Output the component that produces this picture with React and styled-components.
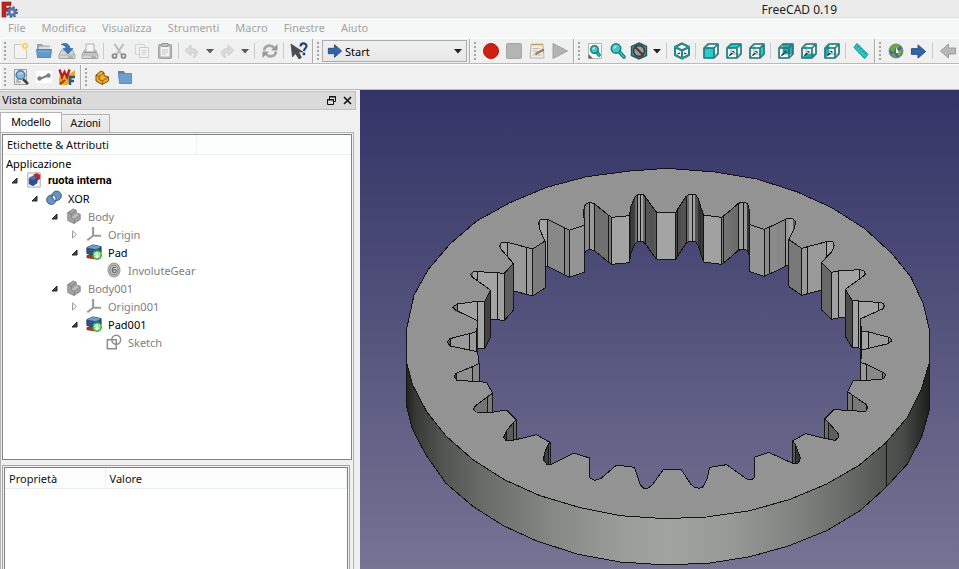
import React from "react";
import styled, { createGlobalStyle } from "styled-components";

const GlobalStyle = createGlobalStyle`
  * { box-sizing: border-box; }
  body {
    margin: 0;
    background: #f0f0f0;
    font-family: "Noto Sans", "Open Sans", sans-serif;
    font-size: 11px;
    color: #111;
  }
  button, select { font: inherit; color: inherit; }
`;

const compactFont = `"Roboto", "Liberation Sans", sans-serif`;

/* ---------- window chrome ---------- */

const Window = styled.div`
  display: flex;
  flex-direction: column;
  height: 100vh;
  overflow: hidden;
`;

const TitleBar = styled.header`
  display: grid;
  grid-template-columns: 1fr auto 122px;
  align-items: center;
  height: 18px;
  flex: none;
  background: #ebebeb;
  border-bottom: 1px solid #dfe1e1;
`;

const AppTitle = styled.h1`
  margin: 0;
  font-size: 12px;
  line-height: 20px;
  font-weight: 400;
  color: #222;
`;

const MenuBar = styled.nav`
  display: flex;
  height: 20px;
  flex: none;
  background: #f6f8f8;
`;

const MenuItem = styled.button`
  border: 0;
  background: none;
  padding: 0 8px;
  line-height: 20px;
  color: #a3a49f;
`;

const ToolRow = styled.div`
  display: flex;
  height: 26px;
  flex: none;
  overflow: hidden;
  background: #f0f0f0;
  border-top: 1px solid #fff;
  border-bottom: 1px solid #b9b8bf;
`;

const ToolGroup = styled.div`
  display: flex;
  flex: none;
  align-items: center;
  padding-right: 2px;
  border-left: 1px solid #fff;
  border-right: 1px solid ${(p) => (p.$last ? "transparent" : "#a9a9ab")};
`;

const Grip = styled.span`
  width: 3px;
  height: 18px;
  margin: 0 2px 0 3px;
  background: radial-gradient(circle at 1px 1px, #a4a4a4 1px, transparent 1px) 0 0 / 3px 4px;
`;

const ToolButton = styled.button`
  display: flex;
  align-items: center;
  justify-content: center;
  width: ${(p) => (p.$split ? 20 : 23)}px;
  height: 22px;
  padding: 0;
  border: 0;
  background: none;
  opacity: ${(p) => (p.disabled ? 0.4 : 1)};
`;

const MenuArrow = styled.button`
  display: flex;
  align-items: center;
  justify-content: center;
  width: 15px;
  height: 22px;
  padding: 0;
  border: 0;
  background: none;
`;

const Divider = styled.span`
  width: 1px;
  height: 16px;
  margin: 0 3px 0 2px;
  background: #cbcbcb;
`;

const Combo = styled.label`
  display: flex;
  align-items: center;
  width: 145px;
  height: 22px;
  padding: 0 4px;
  border: 1px solid #acacac;
  background: linear-gradient(#f0f0f0, #e8e8e8);
`;

const ComboSelect = styled.select`
  flex: 1;
  min-width: 0;
  appearance: none;
  border: 0;
  padding: 0 0 0 2px;
  background: none;
  outline: none;
  color: #000;
`;

/* ---------- combined view ---------- */

const Workspace = styled.main`
  display: flex;
  flex: 1;
  min-height: 0;
`;

const Dock = styled.aside`
  display: flex;
  flex-direction: column;
  width: 356px;
  flex: none;
  margin-right: 4px;
  padding-top: 1px;
`;

const DockTitle = styled.div`
  display: flex;
  align-items: center;
  height: 19px;
  flex: none;
  padding: 0 0 0 2px;
  background: #dadada;
  border: 1px solid #c3c3c3;
  border-left: 0;
`;

const DockName = styled.h2`
  flex: 1;
  margin: 0;
  font-family: ${compactFont};
  font-size: 11px;
  font-weight: 400;
`;

const DockButton = styled.button`
  display: flex;
  align-items: center;
  justify-content: center;
  width: 16px;
  height: 16px;
  padding: 0;
  border: 0;
  background: none;
`;

const Tabs = styled.div`
  display: flex;
  align-items: flex-end;
  height: 22px;
  flex: none;
  padding-top: 2px;
`;

const Tab = styled.button`
  width: ${(p) => (p.$active ? 62 : 48)}px;
  height: ${(p) => (p.$active ? 20 : 18)}px;
  padding: 0;
  border: 1px solid #b4b4b4;
  border-width: 1px 1px 0 ${(p) => (p.$active ? 1 : 0)}px;
  background: ${(p) => (p.$active ? "#fff" : "linear-gradient(#f0f0f0, #e6e6e6)")};
  font-family: ${compactFont};
  line-height: 18px;
`;

const TabPage = styled.div`
  display: flex;
  flex-direction: column;
  flex: 1;
  min-height: 0;
  gap: 5px;
  margin-right: 2px;
  padding: 1px 1px 0 1px;
  border: 1px solid #b4b4b4;
  border-bottom: 0;
`;

const TreeFrame = styled.section`
  display: flex;
  flex-direction: column;
  flex: 327 1 0;
  min-height: 0;
  overflow: hidden;
  background: #fff;
  border: 1px solid #828282;
`;

const TreeHeader = styled.div`
  display: grid;
  grid-template-columns: 194px 1fr;
  height: 20px;
  flex: none;
  line-height: 20px;
  background: #fcfdfd;
  border-bottom: 1px solid #edf1f1;
`;

const TreeColumn = styled.span`
  padding-left: 4px;
  border-right: 1px solid #edf1f1;
`;

const Tree = styled.ul`
  margin: 0;
  padding: 0;
  list-style: none;
`;

const TreeRow = styled.li`
  display: flex;
  align-items: center;
  height: ${(p) => (p.$root ? 16 : 18)}px;
  padding-left: ${(p) => (p.$root ? 3 : p.$depth * 20 - 15)}px;
  color: ${(p) => (p.$hidden ? "#808080" : "#000")};
  font-weight: ${(p) => (p.$bold ? 700 : 400)};
  font-family: ${(p) => (p.$bold ? compactFont : "inherit")};
`;

const Expander = styled.span`
  display: flex;
  justify-content: center;
  width: 12px;
  margin-right: 6px;
`;

const NodeIcon = styled.span`
  display: flex;
  width: 18px;
  margin-right: 4px;
`;

const PropertyFrame = styled.section`
  display: flex;
  flex: 103 1 0;
  min-height: 0;
  margin-right: 2px;
  padding: 1px 1px 0 1px;
  border: 1px solid #a4a4a4;
  border-bottom: 0;
`;

const PropertyBody = styled.div`
  flex: 1;
  background: #fff;
  border: 1px solid #828282;
  border-bottom: 0;
`;

const PropertyTable = styled.table`
  width: 100%;
  border-collapse: collapse;
  table-layout: fixed;
`;

const PropertyHead = styled.th`
  width: ${(p) => (p.$narrow ? "100px" : "auto")};
  height: 21px;
  padding: 0 4px;
  text-align: left;
  font-weight: 400;
  background: #fcfcfc;
  border-right: 1px solid #edf1f1;
  border-bottom: 1px solid #e8eeee;
`;

/* ---------- 3D viewport ---------- */

const Viewport = styled.section`
  flex: 1;
  min-width: 0;
  background: linear-gradient(#333366, #767493);
`;

const Scene = styled.svg`
  display: block;
  width: 100%;
  height: 100%;
`;

/* Scene units are thirds of a pixel. Each run is [dx, dy, "points"];
   "!" marks a profile knot that gets a vertical edge line. */
const HOLE_RUNS = [
  [900, 210, "47,157! 53,147! 64,130 78,110! 86,103 97,102! 106,103 115,116 122,140 131,165! 184,172! 190,168! 203,158 215,148 235,130! 250,126! 262,130 267,145 268,193! 313,208! 328,201! 352,190 376,178! 386,175 398,175 407,185 402,208 386,238! 425,265! 443,260! 500,245! 518,244 523,257 515,275 484,308! 514,337! 535,333! 597,329! 611,332 616,342 608,350 556,388! 577,422! 596,423! 655,427! 670,430 674,439 668,447 600,477! 605,514! 626,516! 684,531! 693,536 695,543 684,551 606,570"],
  [900, 750, "602,68! 620,73! 667,96! 677,103 672,115 660,119 580,122 563,155! 577,165! 618,193! 623,203 617,214 562,212 523,208 494,237! 506,248! 534,280 536,292 525,301 490,294 436,281 398,303! 407,315! 421,355 415,369 400,371 326,337 282,352! 284,412 275,419 260,417 200,374 149,382 142,415 130,440 118,445 104,442 92,432 64,389 10,389"],
  [120, 750, "755,437 743,445 732,445 721,435 703,382 650,375 603,415 585,421 570,415 567,370! 569,354! 521,339 455,373 441,373 430,360! 435,335 444,315! 450,307! 409,284 335,302 318,302 311,292 320,272! 340,248! 349,240! 320,210 275,217 228,216 220,208 226,198 263,170! 278,160! 260,127 235,125 170,121 163,110 168,100! 217,80! 237,70! 233,35"],
  [120, 210, "232,575 150,558 142,546 150,536! 208,521! 230,515! 233,482 168,451 158,441 172,432! 232,424! 254,424! 271,390! 218,352 211,343 220,335 232,335! 292,338! 312,341! 340,310! 305,270 298,258 303,249 322,247! 380,262! 398,267! 435,243! 420,210 416,190 420,179 442,178! 493,203! 508,211! 554,195! 550,155 556,133 568,127! 583,131! 604,148 625,165! 635,172! 688,167! 693,138 705,110 713,103! 720,103! 728,103 737,112! 750,130 762,147 770,157!"],
];

const OUTER_BACK = "138,725 162,615 205,538 270,462 350,393 450,338 560,292 680,260 810,243 920,235 960,238 1065,246 1190,267 1310,305 1415,353 1513,415 1595,490 1652,560 1690,642 1708,718";
const RIM_TOP = "1708,818 1685,895 1642,982 1578,1058 1497,1126 1400,1182 1290,1228 1170,1262 1040,1281 915,1286 780,1277 660,1253 540,1217 435,1170 340,1110 258,1038 200,965 158,885 138,810";
const RIM_BOTTOM = "138,940 156,1015 198,1095 258,1180 340,1250 430,1307 530,1353 655,1393 780,1416 920,1425 1050,1419 1170,1400 1285,1368 1400,1322 1500,1262 1578,1192 1642,1122 1685,1040 1708,960";

const DEPTH = 141;
const hole = HOLE_RUNS.flatMap(([dx, dy, text]) =>
  text.split(" ").map((token) => {
    const [x, y] = token.replace("!", "").split(",").map(Number);
    return { x: x + dx, y: y + dy, knot: token.endsWith("!") };
  })
);
const holePoints = hole.map((p) => `${p.x},${p.y}`).join(" ");

const walls = hole
  .map((a, i) => ({ a, b: hole[(i + 1) % hole.length] }))
  .filter(({ a, b }) => b.x > a.x)
  .map(({ a, b }) => {
    const dx = b.x - a.x;
    const facing = dx / Math.hypot(dx, (b.y - a.y) * 1.5);
    const v = Math.round(22 + 142 * facing);
    return { a, b, fill: `rgb(${v},${v},${v})` };
  })
  .sort((p, q) => p.a.y + p.b.y - q.a.y - q.b.y);

function RingGear() {
  return (
    <Scene viewBox="0 0 1797 1437" preserveAspectRatio="xMidYMid meet" role="img" aria-label="ruota interna">
      <defs>
        <linearGradient id="rim" gradientUnits="userSpaceOnUse" x1="138" x2="1708" y1="0" y2="0">
          <stop offset="0" stopColor="#202220" />
          <stop offset="0.02" stopColor="#383a38" />
          <stop offset="0.07" stopColor="#525452" />
          <stop offset="0.15" stopColor="#6a6c6a" />
          <stop offset="0.28" stopColor="#868886" />
          <stop offset="0.4" stopColor="#999b99" />
          <stop offset="0.5" stopColor="#a2a4a2" />
          <stop offset="0.62" stopColor="#979997" />
          <stop offset="0.76" stopColor="#7e807e" />
          <stop offset="0.88" stopColor="#5e605e" />
          <stop offset="0.95" stopColor="#484a48" />
          <stop offset="1" stopColor="#1c1e1c" />
        </linearGradient>
        <clipPath id="bore"><polygon points={holePoints} /></clipPath>
      </defs>
      <g stroke="#141414" strokeWidth="3" strokeLinejoin="round" shapeRendering="crispEdges">
        <polygon points={`${RIM_TOP} ${RIM_BOTTOM}`} fill="url(#rim)" />
        <path d="M1578,1058V1192" />
        <path
          fillRule="evenodd"
          fill="#929392"
          d={`M${OUTER_BACK} ${RIM_TOP}Z M${holePoints}Z`}
        />
        <g clipPath="url(#bore)">
          {walls.map(({ a, b, fill }, i) => (
            <g key={i}>
              <polygon
                points={`${a.x},${a.y} ${b.x},${b.y} ${b.x},${b.y + DEPTH} ${a.x},${a.y + DEPTH}`}
                fill={fill}
                stroke="none"
              />
              <path d={`M${a.x},${a.y + DEPTH}L${b.x},${b.y + DEPTH}`} />
              {a.knot && <path d={`M${a.x},${a.y}v${DEPTH}`} />}
              {b.knot && <path d={`M${b.x},${b.y}v${DEPTH}`} />}
            </g>
          ))}
        </g>
        <polygon points={holePoints} fill="none" />
      </g>
    </Scene>
  );
}

/* ---------- icons ---------- */

const Glyph = ({ size = 18, children }) => (
  <svg width={size} height={size} viewBox="0 0 18 18" aria-hidden="true">{children}</svg>
);

const NewIcon = () => (
  <Glyph>
    <path d="M2.500 2.500h11l1 2v12h-12z" fill="#f3f3f1" stroke="#c9c9c5" />
    <circle cx="13" cy="4" r="3.400" fill="#fbe58c" />
    <circle cx="13" cy="4" r="2" fill="#fff" stroke="#f0be37" />
  </Glyph>
);
const OpenIcon = () => (
  <Glyph>
    <path d="M2 2h5l1 1.500h7V14H2z" fill="#9da2a7" />
    <path d="M4 4.500h11v5H4z" fill="#d8dce0" />
    <path d="M1.500 7.500h15l-1 8h-13z" fill="#6399cd" stroke="#5189c0" />
    <path d="M3 9.500h12" stroke="#83b0dc" />
  </Glyph>
);
const Tray = () => (
  <>
    <path d="M3.500 8h11l2.500 5v3.500H1V13z" fill="#d5d6d5" stroke="#a3a5a3" />
    <path d="M1.500 13h15" stroke="#adafad" />
    <path d="M10 15h5" stroke="#8b8d8b" />
  </>
);
const SaveIcon = () => (
  <Glyph>
    <Tray />
    <path d="M3 2.500C8 0 12 2.500 12 6.500h3L10 12 5 6.500h3C8 4.500 6 3 3 2.500z" fill="#3f78b5" stroke="#285e9a" strokeWidth=".6" />
  </Glyph>
);
const PrintIcon = () => (
  <Glyph>
    <Tray />
    <path d="M5 2h8v8H5z" fill="#f4f4f4" stroke="#b2b2b2" />
    <path d="M2.500 10.500h13" stroke="#9a9a9a" strokeWidth="1.600" />
  </Glyph>
);
const CutIcon = () => (
  <Glyph>
    <path d="M4.500 2l7 10.500M13.500 2l-7 10.500" stroke="#b9bbb9" strokeWidth="2" />
    <circle cx="4.500" cy="14" r="2" fill="none" stroke="#858785" strokeWidth="1.700" />
    <circle cx="13.500" cy="14" r="2" fill="none" stroke="#858785" strokeWidth="1.700" />
  </Glyph>
);
const CopyIcon = () => (
  <Glyph>
    <path d="M2.500 2.500h9v10h-9z" fill="#f4f4f4" stroke="#aaa" />
    <path d="M6.500 5.500h9v10h-9z" fill="#f8f8f8" stroke="#999" />
    <path d="M8.500 8.500h5M8.500 10.500h5M8.500 12.500h4" stroke="#999" />
  </Glyph>
);
const PasteIcon = () => (
  <Glyph>
    <rect x="2.500" y="2.500" width="13" height="14" rx="1" fill="#b4b4b4" stroke="#a0a0a0" />
    <path d="M4.500 4.500h9v10h-9z" fill="#f3f3f3" />
    <path d="M6 1.500h6v3H6z" fill="#c4c4c4" stroke="#969696" />
    <path d="M6 8h6M6 10h6M6 12h4" stroke="#c4c4c4" />
  </Glyph>
);
const UndoIcon = ({ flip }) => (
  <Glyph>
    <path
      transform={flip ? "matrix(-1 0 0 1 18 0)" : undefined}
      d="M8 3L2 8.500 8 13.500v-3c3 0 4 1.500 2.500 5.500C17 12 15 6.500 8 6.500z"
      fill="#b9bab9" stroke="#8f918f" strokeWidth=".8"
    />
  </Glyph>
);
const RefreshIcon = () => (
  <Glyph>
    <g fill="none" stroke="#a5a7a5" strokeWidth="2.600">
      <path d="M3 8.500C3.500 3.500 10 2 13 6" />
      <path d="M15 9.500C14.500 14.500 8 16 5 12" />
    </g>
    <path d="M16.500 2v6.500H10zM1.500 16V9.500H8z" fill="#969896" />
  </Glyph>
);
const WhatsThisIcon = () => (
  <Glyph>
    <path d="M1 2l1.500 13 3-3.500L9 17l2.500-1.500-3-5.500H13z" fill="#4c4f52" stroke="#333" strokeWidth=".6" />
    <path d="M10.500 4.500c0-4 6-4 6-.5 0 2.500-2.500 2-2.500 5" fill="none" stroke="#24417f" strokeWidth="2.200" />
    <circle cx="14" cy="12" r="1.400" fill="#24417f" />
  </Glyph>
);
const ArrowIcon = ({ left, color = "#3465a8", edge = "#23487e", size }) => (
  <Glyph size={size}>
    <path
      transform={left ? "matrix(-1 0 0 1 18 0)" : undefined}
      d="M1.500 6h7V2l8 7-8 7v-4h-7z" fill={color} stroke={edge} strokeWidth="1"
    />
  </Glyph>
);
const RecordIcon = () => (
  <Glyph><circle cx="9" cy="9" r="7.500" fill="#d21f10" stroke="#a81a10" /></Glyph>
);
const StopIcon = () => (
  <Glyph><rect x="1.500" y="1.500" width="15" height="15" rx="1" fill="#b4b4b4" stroke="#a8a8a8" /></Glyph>
);
const EditMacroIcon = () => (
  <Glyph>
    <path d="M3 2.500h12l1 13.500H2z" fill="#efeee9" stroke="#b8b6ae" />
    <path d="M3 2.500h12" stroke="#c8a15a" strokeWidth="1.600" />
    <path d="M4.500 6.500h7M4.500 9h5M4.500 13h9" stroke="#b9b9b5" />
    <path d="M7 11.500l8-4.500 1 1.500-8 4z" fill="#c8873c" stroke="#5d4a2c" strokeWidth=".5" />
  </Glyph>
);
const PlayIcon = () => (
  <Glyph><path d="M2 1.500L16.500 9 2 16.500z" fill="#b3b3b3" stroke="#a2a2a2" /></Glyph>
);
const Lens = ({ cx, cy, r, end }) => (
  <>
    <path d={`M${cx + r * 0.7} ${cy + r * 0.7}L${end} ${end}`} stroke="#14777a" strokeWidth="3.600" strokeLinecap="round" />
    <path d={`M${cx + r * 0.7} ${cy + r * 0.7}L${end} ${end}`} stroke="#2bc4c8" strokeWidth="1.600" strokeLinecap="round" />
    <circle cx={cx} cy={cy} r={r} fill="#45c4c6" stroke="#177f82" strokeWidth="1.500" />
    <path d={`M${cx - r * 0.5} ${cy}l${r * 0.6} ${-r * 0.6}`} stroke="#c9f3f3" strokeWidth="1.300" />
  </>
);
const FitAllIcon = () => (
  <Glyph>
    <path d="M2.500 1.500h13v15h-13z" fill="#f6f6f6" stroke="#b5b5b5" />
    <path d="M2.500 12l4.500 4.500H2.500z" fill="#666" />
    <Lens cx={8.500} cy={7.500} r={3.800} end={13} />
  </Glyph>
);
const FitSelectionIcon = () => (
  <Glyph><Lens cx={7} cy={6.500} r={4.700} end={15} /></Glyph>
);
const DrawStyleIcon = () => (
  <Glyph>
    <path d="M9 1l7.500 3.500v9L9 17l-7.500-3.500v-9z" fill="#35a3a6" stroke="#1d5c5e" strokeWidth="1.400" />
    <circle cx="9" cy="9" r="5.500" fill="#8aa5a6" stroke="#54373a" strokeWidth="1.800" />
    <path d="M5 5l8 8" stroke="#7a2227" strokeWidth="2" />
  </Glyph>
);
const IsoIcon = () => (
  <Glyph>
    <path d="M9 1.500L16 5v8l-7 3.500L2 13V5z" fill="#f2f7f7" />
    <path d="M9 1.500L16 5v8l-7 3.500L2 13V5zM2 5l7 3.500L16 5M9 8.500v8" fill="none" stroke="#1a6c6f" strokeWidth="2" strokeLinejoin="round" />
    <path d="M9 1.500L16 5v8l-7 3.500L2 13V5zM2 5l7 3.500L16 5M9 8.500v8" fill="none" stroke="#38b2b5" strokeWidth=".7" />
    <path d="M4.500 12l2.500-1M11 11l2.500 1" fill="none" stroke="#222" strokeWidth="1.200" />
  </Glyph>
);
const FACES = {
  front: "M2 6h10v10H2z",
  top: "M2 6l4-4h10l-4 4z",
  right: "M12 6l4-4v10l-4 4z",
  rear: "M6 2h10v10H6z",
  bottom: "M2 16l4-4h10l-4 4z",
  left: "M2 6l4-4v10l-4 4z",
};
const CubeIcon = ({ face }) => (
  <Glyph>
    <path d="M2 6l4-4h10v10l-4 4H2z" fill="#f3f8f8" />
    <path d="M6 12l-3.500 3.500M6 12h9M6 12V3" stroke="#4a9a9d" strokeWidth=".8" />
    <path d={FACES[face]} fill={face === "left" || face === "rear" || face === "bottom" ? "#2aa9ad" : "#27cdd1"} />
    <path d="M2 6l4-4h10v10l-4 4H2zM2 6h10v10M12 6l4-4" fill="none" stroke="#1a6467" strokeWidth="1.600" strokeLinejoin="round" />
    <path d="M2 6l4-4h10v10l-4 4H2zM2 6h10v10M12 6l4-4" fill="none" stroke="#38a7aa" strokeWidth=".5" />
    {face !== "front" && <path d="M4.500 13.500l3-2.500M7.500 9l2 1.500" stroke="#222" strokeWidth="1.200" />}
  </Glyph>
);
const RulerIcon = () => (
  <Glyph>
    <path d="M5 1.500L16 12.500 12.500 16.500 2 5.500z" fill="#2bc6ca" stroke="#178c90" />
    <path d="M7 4l-1.500 1.500M9.500 6.200L8 7.700M12 8.500L10.500 10M14.200 10.600l-1.400 1.500" stroke="#0f6f72" />
  </Glyph>
);
const GlobeIcon = () => (
  <Glyph>
    <circle cx="9" cy="9" r="7" fill="#47688f" stroke="#7f8b94" />
    <path d="M3 6c2-4 8-5 10-2l-3 3-2-1-1 4-3-1zM10 9l5-2c1 3-1 7-4 7z" fill="#6aab3c" />
    <path d="M4 12l3-1 2 4H7z" fill="#6aab3c" />
    <path d="M9 5l3 6H9z" fill="#f5f8fa" />
  </Glyph>
);
const SearchPageIcon = () => (
  <Glyph>
    <path d="M2.500 1.500h12v15h-12z" fill="#eee" stroke="#9b9b9b" />
    <path d="M4 14h5M4 12h3" stroke="#888" />
    <path d="M11 11l5 5" stroke="#444" strokeWidth="2.600" />
    <circle cx="8.500" cy="7" r="4.300" fill="#8ab7dc" stroke="#4f7ea6" strokeWidth="1.600" />
    <path d="M6.500 6.500c1-2 3-2 4-1" stroke="#e6f2fb" fill="none" />
  </Glyph>
);
const LinkIcon = () => (
  <Glyph>
    <path d="M1 3h16v12H1z" fill="#fff" />
    <g fill="none" stroke="#7c7e80" strokeWidth="2">
      <path d="M4.500 11L13 7.500" />
      <circle cx="4.500" cy="10.500" r="1.200" /><circle cx="13.500" cy="7.500" r="1.200" />
    </g>
  </Glyph>
);
const WebFormIcon = () => (
  <Glyph>
    <path d="M9 8l8-6v6l-8 9H1V9z" fill="#e6a828" />
    <path d="M1.500 1.500L4 9l2.500-5L9 9l2.500-7.500" fill="none" stroke="#bb2018" strokeWidth="2.400" />
    <path d="M12 17V9h5M12 13h4" fill="none" stroke="#2d568b" strokeWidth="2.400" />
    <path d="M2 16l5-4" stroke="#9a3a1c" strokeWidth="2" />
  </Glyph>
);
const PartIcon = () => (
  <Glyph>
    <path d="M3 7l5-4 3 1.500v3L15.500 9v4L9 16.500 3 13z" fill="#f0ae2b" stroke="#7b4f0c" strokeWidth="1" strokeLinejoin="round" />
    <path d="M3 7l3 1.500v3l3.500 1.500 6-4M9.500 13v3.500M6 8.500l5-4" fill="none" stroke="#7b4f0c" strokeWidth=".9" />
  </Glyph>
);
const FolderIcon = () => (
  <Glyph>
    <path d="M2 3h6l1 2h6v3H2z" fill="#6b8093" />
    <path d="M2.500 5.500h13v10h-12z" fill="#6b9fce" stroke="#5a90c2" />
  </Glyph>
);
const FreeCadLogo = () => (
  <Glyph>
    <path d="M2 1h9v3.500H6V7h3.500v3H6v6H2z" fill="#c0231f" stroke="#8d1713" strokeWidth=".6" />
    <circle cx="12" cy="11" r="3" fill="none" stroke="#5a74b2" strokeWidth="3" />
    <circle cx="12" cy="11" r="5" fill="none" stroke="#3c5594" strokeWidth="1.800" strokeDasharray="2 1.930" />
  </Glyph>
);
const DownIcon = ({ color = "#222" }) => (
  <svg width="8" height="5" viewBox="0 0 8 5" aria-hidden="true"><path d="M0 0h8L4 4.500z" fill={color} /></svg>
);

const DocumentIcon = () => (
  <Glyph size={16}>
    <path d="M2 1h14v16H2z" fill="#f7f7f7" stroke="#a3a3a3" />
    <path d="M8 3l4-2 4 2v5l-4 2z" fill="#c4282b" />
    <path d="M3.500 7l4.500-2.500 4.500 2v6L8 15.500l-4.500-2z" fill="#2e508e" stroke="#213c70" strokeWidth=".6" />
    <path d="M3.500 7L8 9l4.500-2.500L8 4.500z" fill="#4d74b6" />
  </Glyph>
);
const XorIcon = () => (
  <Glyph size={16}>
    <g stroke="#34567a" strokeWidth="1">
      <circle cx="6" cy="11" r="5.300" fill="#6594c0" />
      <circle cx="12" cy="6.500" r="5.300" fill="#6594c0" />
      <path d="M7 5.700C9.500 5.500 12 8 11.200 11.800 8.500 12 6.500 9 7 5.700z" fill="#f4f8fb" />
    </g>
  </Glyph>
);
const BodyIcon = () => (
  <Glyph size={16}>
    <path d="M2 5l6-4 3.500 1.500v3L16 7v6l-7 4.500-7-3.500z" fill="#a2a2a2" stroke="#858585" />
    <path d="M2 5l4 2v4l3.500 1.500L16 7.500M9.500 12.500V17M6 7l5.500-4" fill="none" stroke="#7d7d7d" />
    <path d="M6 11l5.500-4.500L15 8l-5.500 4z" fill="#bdbdbd" />
  </Glyph>
);
const OriginIcon = () => (
  <Glyph size={16}>
    <path d="M8 1v10h9M8 11l-6.500 5" fill="none" stroke="#9a9a9a" strokeWidth="2.400" />
  </Glyph>
);
const PadIcon = () => (
  <Glyph size={16}>
    <path d="M1 13l5-2 3 2v4l-8-1.500z" fill="#a83433" stroke="#651c1c" strokeWidth=".6" />
    <path d="M1 4l7-3 9 2v6.500L10 12.500 1 10.500z" fill="#2d5585" stroke="#1d3652" strokeWidth="1" />
    <path d="M1 4l7-3 9 2-6 3z" fill="#719fcd" />
    <circle cx="12.500" cy="12.500" r="4.600" fill="#fff" stroke="#2fb62f" strokeWidth="1.800" />
    <path d="M11.200 8.500h2.600v4h2.400l-3.700 4.500-3.700-4.500h2.400z" fill="#fff" stroke="#2fb62f" strokeWidth=".7" />
  </Glyph>
);
const GearIcon = () => (
  <Glyph size={16}>
    <ellipse cx="9" cy="9" rx="6.600" ry="7.600" fill="#d8d8d8" stroke="#a2a2a2" strokeWidth="1.600" />
    <ellipse cx="9" cy="9" rx="4.600" ry="5.400" fill="none" stroke="#8c8c8c" strokeWidth="1.600" />
    <path d="M11 6.500C8 5 6.500 7.500 7 10c.5 2.500 4.500 2.500 4.500 0S8.500 8.500 7.500 10" fill="none" stroke="#6c6c6c" strokeWidth="1.400" />
  </Glyph>
);
const SketchIcon = () => (
  <Glyph size={16}>
    <path d="M1.500 6.500h10v10h-10z" fill="none" stroke="#8e8e8e" strokeWidth="1.700" />
    <circle cx="11.500" cy="6.500" r="5" fill="none" stroke="#8e8e8e" strokeWidth="1.700" />
  </Glyph>
);
const OpenMark = () => (
  <svg width="7" height="7" viewBox="0 0 7 7" aria-hidden="true"><path d="M6 1v5H1z" fill="#4a4a4a" stroke="#222" /></svg>
);
const ClosedMark = () => (
  <svg width="7" height="9" viewBox="0 0 7 9" aria-hidden="true"><path d="M1.500 .9l4 3.600-4 3.600z" fill="#fff" stroke="#9a9a9a" /></svg>
);

/* ---------- content ---------- */

const MENUS = ["File", "Modifica", "Visualizza", "Strumenti", "Macro", "Finestre", "Aiuto"];

const NODES = [
  { label: "ruota interna", depth: 1, icon: DocumentIcon, mark: "open", bold: true },
  { label: "XOR", depth: 2, icon: XorIcon, mark: "open" },
  { label: "Body", depth: 3, icon: BodyIcon, mark: "open", hidden: true },
  { label: "Origin", depth: 4, icon: OriginIcon, mark: "closed", hidden: true },
  { label: "Pad", depth: 4, icon: PadIcon, mark: "open" },
  { label: "InvoluteGear", depth: 5, icon: GearIcon, hidden: true },
  { label: "Body001", depth: 3, icon: BodyIcon, mark: "open", hidden: true },
  { label: "Origin001", depth: 4, icon: OriginIcon, mark: "closed", hidden: true },
  { label: "Pad001", depth: 4, icon: PadIcon, mark: "open" },
  { label: "Sketch", depth: 5, icon: SketchIcon, hidden: true },
];

const Tool = ({ label, children, ...rest }) => (
  <ToolButton type="button" aria-label={label} {...rest}>{children}</ToolButton>
);
const SplitTool = ({ label, disabled, children }) => (
  <>
    <Tool label={label} disabled={disabled} $split>{children}</Tool>
    <MenuArrow type="button" aria-label={`${label}: menu`}>
      <DownIcon color={disabled ? "#5c5c5c" : "#222"} />
    </MenuArrow>
  </>
);

export default function App() {
  return (
    <Window>
      <GlobalStyle />
      <TitleBar>
        <FreeCadLogo />
        <AppTitle>FreeCAD 0.19</AppTitle>
      </TitleBar>
      <MenuBar>
        {MENUS.map((name) => <MenuItem type="button" key={name}>{name}</MenuItem>)}
      </MenuBar>
      <ToolRow>
        <ToolGroup>
          <Grip />
          <Tool label="Nuovo"><NewIcon /></Tool>
          <Tool label="Apri"><OpenIcon /></Tool>
          <Tool label="Salva"><SaveIcon /></Tool>
          <Tool label="Stampa"><PrintIcon /></Tool>
          <Divider />
          <Tool label="Taglia"><CutIcon /></Tool>
          <Tool label="Copia" disabled><CopyIcon /></Tool>
          <Tool label="Incolla"><PasteIcon /></Tool>
          <Divider />
          <SplitTool label="Annulla" disabled><UndoIcon /></SplitTool>
          <SplitTool label="Ripeti" disabled><UndoIcon flip /></SplitTool>
          <Divider />
          <Tool label="Aggiorna"><RefreshIcon /></Tool>
          <Divider />
          <Tool label="Che cos'è"><WhatsThisIcon /></Tool>
        </ToolGroup>
        <ToolGroup>
          <Grip />
          <Combo>
            <ArrowIcon size={16} />
            <ComboSelect aria-label="Ambiente" defaultValue="Start">
              <option>Start</option>
            </ComboSelect>
            <DownIcon />
          </Combo>
        </ToolGroup>
        <ToolGroup>
          <Grip />
          <Tool label="Registra macro"><RecordIcon /></Tool>
          <Tool label="Ferma"><StopIcon /></Tool>
          <Tool label="Macro"><EditMacroIcon /></Tool>
          <Tool label="Esegui"><PlayIcon /></Tool>
        </ToolGroup>
        <ToolGroup>
          <Grip />
          <Tool label="Adatta tutto"><FitAllIcon /></Tool>
          <Tool label="Adatta selezione"><FitSelectionIcon /></Tool>
          <SplitTool label="Stile"><DrawStyleIcon /></SplitTool>
          <Divider />
          <Tool label="Isometrica"><IsoIcon /></Tool>
          <Divider />
          <Tool label="Frontale"><CubeIcon face="front" /></Tool>
          <Tool label="Alto"><CubeIcon face="top" /></Tool>
          <Tool label="Destra"><CubeIcon face="right" /></Tool>
          <Divider />
          <Tool label="Posteriore"><CubeIcon face="rear" /></Tool>
          <Tool label="Basso"><CubeIcon face="bottom" /></Tool>
          <Tool label="Sinistra"><CubeIcon face="left" /></Tool>
          <Divider />
          <Tool label="Misura"><RulerIcon /></Tool>
        </ToolGroup>
        <ToolGroup $last>
          <Grip />
          <Tool label="Sito web"><GlobeIcon /></Tool>
          <Tool label="Pagina iniziale"><ArrowIcon size={17} /></Tool>
          <Divider />
          <Tool label="Indietro"><ArrowIcon left color="#b8b8b8" edge="#9a9a9a" /></Tool>
        </ToolGroup>
      </ToolRow>
      <ToolRow>
        <ToolGroup>
          <Grip />
          <Tool label="Cerca"><SearchPageIcon /></Tool>
          <Tool label="Collega"><LinkIcon /></Tool>
          <Tool label="WF"><WebFormIcon /></Tool>
        </ToolGroup>
        <ToolGroup $last>
          <Grip />
          <Tool label="Parte"><PartIcon /></Tool>
          <Tool label="Gruppo"><FolderIcon /></Tool>
        </ToolGroup>
      </ToolRow>
      <Workspace>
        <Dock>
          <DockTitle>
            <DockName>Vista combinata</DockName>
            <DockButton type="button" aria-label="Sgancia">
              <svg width="9" height="9" viewBox="0 0 9 9">
                <path d="M2.500 3V.5h6v5H6.500M2 1h7M.5 3.500h6v5h-6zM0 4h7" fill="none" stroke="#111" />
              </svg>
            </DockButton>
            <DockButton type="button" aria-label="Chiudi">
              <svg width="9" height="9" viewBox="0 0 9 9">
                <path d="M1 1l7 7M8 1L1 8" stroke="#111" strokeWidth="1.600" />
              </svg>
            </DockButton>
          </DockTitle>
          <Tabs role="tablist">
            <Tab type="button" role="tab" aria-selected="true" $active>Modello</Tab>
            <Tab type="button" role="tab" aria-selected="false">Azioni</Tab>
          </Tabs>
          <TabPage>
            <TreeFrame>
              <TreeHeader>
                <TreeColumn>Etichette &amp; Attributi</TreeColumn>
              </TreeHeader>
              <Tree role="tree">
                <TreeRow role="treeitem" $root>Applicazione</TreeRow>
                {NODES.map(({ label, depth, icon: Icon, mark, hidden, bold }) => (
                  <TreeRow role="treeitem" key={label} $depth={depth} $hidden={hidden} $bold={bold}>
                    <Expander>
                      {mark === "open" && <OpenMark />}
                      {mark === "closed" && <ClosedMark />}
                    </Expander>
                    <NodeIcon><Icon /></NodeIcon>
                    {label}
                  </TreeRow>
                ))}
              </Tree>
            </TreeFrame>
            <PropertyFrame>
              <PropertyBody>
                <PropertyTable>
                  <thead>
                    <tr>
                      <PropertyHead scope="col" $narrow>Proprietà</PropertyHead>
                      <PropertyHead scope="col">Valore</PropertyHead>
                    </tr>
                  </thead>
                </PropertyTable>
              </PropertyBody>
            </PropertyFrame>
          </TabPage>
        </Dock>
        <Viewport>
          <RingGear />
        </Viewport>
      </Workspace>
    </Window>
  );
}
